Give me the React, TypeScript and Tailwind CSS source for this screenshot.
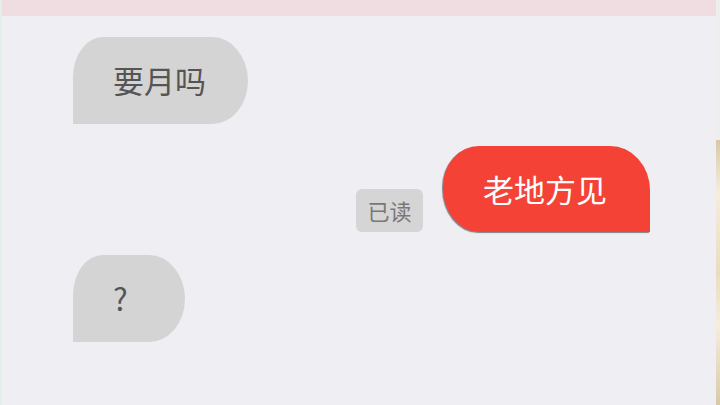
import React from "react";

const font = { fontFamily: '"Noto Sans CJK SC", "Noto Sans", sans-serif' };

const LeftBubble = ({ text, w }: { text: string; w: string }) => (
  <div className="flex">
    <div
      className={`${w} h-[87px] bg-[#d4d4d4] rounded-tl-[30px_40px] rounded-tr-[36px_44px] rounded-br-[36px_43px] rounded-bl-none flex items-center pl-[40px] text-[31px] text-[#555555]`}
    >
      {text}
    </div>
  </div>
);

const App = () => {
  return (
    <div className="w-[720px] h-[405px] flex bg-[#efeef3] overflow-hidden" style={font}>
      <div className="w-[2px] bg-[#e4efea]" />
      <div className="flex-1 flex flex-col">
        <div className="h-[16px] bg-[#f0dde2]" />
        <div className="flex flex-col pl-[71px] pr-[66px] pt-[21px] gap-[22px]">
          <LeftBubble text="要月吗" w="w-[175px]" />
          <div className="flex justify-end items-end gap-[20px]">
            <div className="w-[67px] h-[43px] bg-[#d5d5d5] rounded-[6px] flex items-center justify-center text-[22px] text-[#787878]">
              已读
            </div>
            <div className="w-[207px] h-[86px] bg-[#f44336] rounded-tl-[36px_40px] rounded-bl-[36px_44px] rounded-tr-[40px_44px] rounded-br-none shadow-[-1px_1px_1px_rgba(0,0,0,0.45)] flex items-center pl-[40px] text-[31px] text-white">
              老地方见
            </div>
          </div>
          <div className="mt-px">
            <LeftBubble text="?" w="w-[112px]" />
          </div>
        </div>
      </div>
      <div className="w-[4px] flex flex-col">
        <div className="h-[140px] bg-[#eeeeee]" />
        <div className="flex-1 bg-[linear-gradient(180deg,#d8c8a8,#f5eedd_20%,#e9dcc0_50%,#f5eedd_70%,#d9c9a9)]" />
      </div>
    </div>
  );
};

export default App;
